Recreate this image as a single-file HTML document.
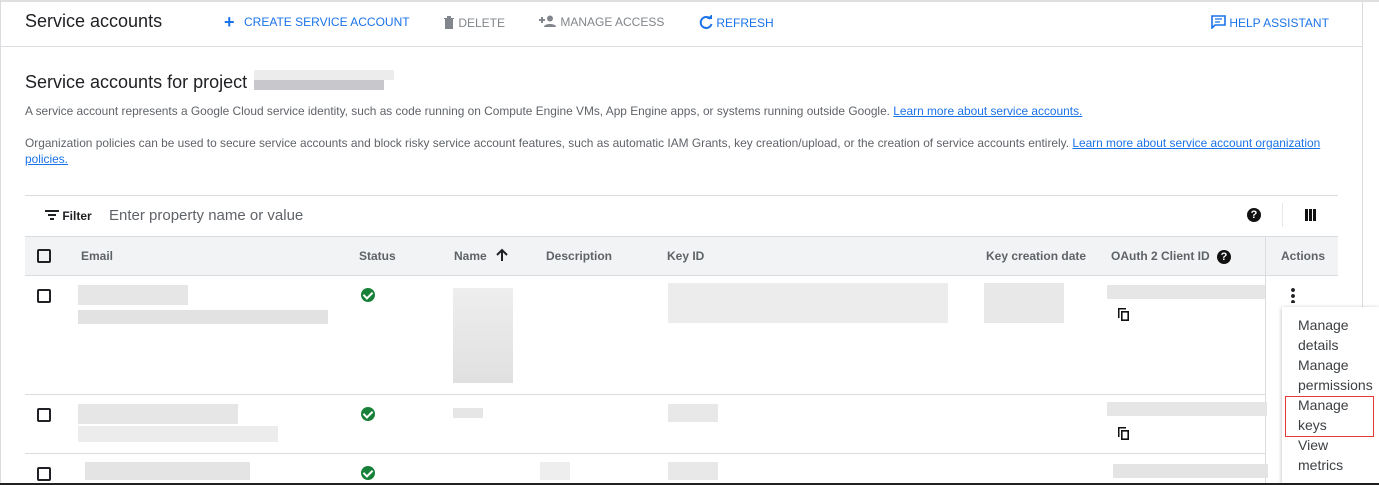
<!DOCTYPE html>
<html><head><meta charset="utf-8"><style>
*{box-sizing:border-box;margin:0;padding:0}
body{width:1379px;height:485px;overflow:hidden;background:#fff;font-family:"Liberation Sans",Arial,sans-serif;color:#202124;position:relative}
.a{position:absolute;white-space:nowrap}
.tb{font-size:12px;color:#1a73e8;font-weight:500;top:15px}
.gr{color:#80868b}
.p{font-size:11.9px;color:#5f6368}
a{color:#1a73e8;text-decoration:underline}
.th{font-size:12px;font-weight:bold;color:#5f6368;top:249px}
.cb{position:absolute;width:14px;height:14px;border:2px solid #202124;border-radius:2px}
.bl{position:absolute;background:#ddd}
.ok{position:absolute;width:14px;height:14px;border-radius:50%;background:#188038}
.ok:after{content:"";position:absolute;left:4px;top:2px;width:4px;height:7px;border:solid #fff;border-width:0 2px 2px 0;transform:rotate(45deg)}
.hl{position:absolute;left:25px;width:1313px;height:1px;background:#dadce0}
.mi{position:absolute;left:1298px;font-size:14px;color:#3c4043;line-height:20px}
</style></head><body>
<div class="a" style="left:0;top:0;width:1379px;height:2px;background:#e0e0e0"></div>
<div class="a" style="left:0;top:0;width:1px;height:485px;background:#dadce0"></div>
<div class="a" style="left:1362px;top:0;width:1px;height:485px;background:#dadce0"></div>
<div class="a" style="left:0;top:46px;width:1362px;height:1px;background:#dadce0"></div>
<div class="a" style="left:0;top:483px;width:1379px;height:2px;background:#222"></div>
<div class="a" style="left:25px;top:11px;font-size:18px">Service accounts</div>
<div class="a" style="left:224px;top:12px;font-size:18px;color:#1a73e8;font-weight:bold">+</div>
<div class="a tb" style="left:244px">CREATE SERVICE ACCOUNT</div>
<div class="a tb gr" style="left:443px"><svg width="12" height="14" style="vertical-align:-2px"><path d="M1 3h10v1H1zM4 1h4v2H4zM2 4h8v10H2z" fill="#80868b"/></svg> DELETE</div>
<div class="a tb gr" style="left:539px"><svg width="18" height="12" style="vertical-align:-1px"><circle cx="11" cy="3.5" r="3" fill="#80868b"/><path d="M5 12c0-4 12-4 12 0z" fill="#80868b"/><path d="M0 5h6M3 2v6" stroke="#80868b" stroke-width="2"/></svg> MANAGE ACCESS</div>
<div class="a tb" style="left:699px"><svg width="14" height="14" style="vertical-align:-2px"><path d="M11.5 4A5.5 5.5 0 1 0 12.5 9" stroke="#1a73e8" stroke-width="2" fill="none"/><path d="M8 4h5V-1z" fill="#1a73e8"/></svg> REFRESH</div>
<div class="a tb" style="left:1211px"><svg width="15" height="14" style="vertical-align:-2px"><path d="M1 1h13v9H4l-3 3z" stroke="#1a73e8" stroke-width="1.6" fill="none"/><path d="M4 4h7M4 7h5" stroke="#1a73e8" stroke-width="1.3"/></svg> HELP ASSISTANT</div>
<div class="a" style="left:25px;top:72px;font-size:18px">Service accounts for project</div>
<div class="a" style="left:254px;top:70px;width:140px;height:10px;background:#ececec"></div>
<div class="a" style="left:254px;top:80px;width:130px;height:10px;background:#c8c8cc"></div>
<div class="a p" style="left:25px;top:104px">A service account represents a Google Cloud service identity, such as code running on Compute Engine VMs, App Engine apps, or systems running outside Google. <a>Learn more about service accounts.</a></div>
<div class="a p" style="left:25px;top:136px">Organization policies can be used to secure service accounts and block risky service account features, such as automatic IAM Grants, key creation/upload, or the creation of service accounts entirely. <a>Learn more about service account organization</a></div>
<div class="a p" style="left:25px;top:152px"><a>policies.</a></div>
<div class="hl" style="top:195px"></div>
<div class="a" style="left:45px;top:209px;font-size:12px;font-weight:bold"><svg width="14" height="10" style="vertical-align:0"><path d="M0 1h14M3 5h8M5 9h4" stroke="#202124" stroke-width="2"/></svg> Filter</div>
<div class="a" style="left:109px;top:207px;font-size:15px;color:#5f6368">Enter property name or value</div>
<div class="a" style="left:1247px;top:208px;width:14px;height:14px;border-radius:50%;background:#111;color:#fff;font-size:11px;font-weight:bold;text-align:center;line-height:14px">?</div>
<div class="a" style="left:1282px;top:203px;width:1px;height:24px;background:#e8e8e8"></div>
<div class="a" style="left:1305px;top:209px;width:12px;height:12px;background:repeating-linear-gradient(90deg,#111 0 3px,#fff 3px 4px)"></div>
<div class="a" style="left:25px;top:236px;width:1313px;height:39px;background:#f1f3f4;border-top:1px solid #dadce0"></div>
<div class="a" style="left:1265px;top:236px;width:1px;height:247px;background:#dadce0"></div>
<div class="cb" style="left:37px;top:249px"></div>
<div class="a th" style="left:81px">Email</div>
<div class="a th" style="left:359px">Status</div>
<div class="a th" style="left:454px">Name</div>
<svg class="a" style="left:495px;top:248px" width="14" height="14"><path d="M7 13V2M2 7l5-5 5 5" stroke="#202124" stroke-width="2" fill="none"/></svg>
<div class="a th" style="left:546px">Description</div>
<div class="a th" style="left:667px">Key ID</div>
<div class="a th" style="left:986px">Key creation date</div>
<div class="a th" style="left:1111px">OAuth 2 Client ID <span style="display:inline-block;width:14px;height:14px;border-radius:50%;background:#111;color:#fff;font-size:11px;text-align:center;line-height:14px;margin-left:4px">?</span></div>
<div class="a th" style="left:1281px">Actions</div>
<div class="hl" style="top:275px"></div>
<div class="hl" style="top:394px;width:1240px"></div>
<div class="hl" style="top:453px;width:1240px"></div>
<div class="cb" style="left:37px;top:289px"></div>
<div class="cb" style="left:37px;top:408px"></div>
<div class="cb" style="left:37px;top:467px"></div>
<div class="ok" style="left:361px;top:288px"></div>
<div class="ok" style="left:361px;top:407px"></div>
<div class="ok" style="left:361px;top:466px"></div>
<div class="bl" style="left:78px;top:285px;width:110px;height:20px;background:#e6e6e6"></div>
<div class="bl" style="left:78px;top:310px;width:250px;height:14px;background:#e2e2e2"></div>
<div class="bl" style="left:453px;top:288px;width:60px;height:95px;background:linear-gradient(#eee,#e0e0e0)"></div>
<div class="bl" style="left:668px;top:283px;width:280px;height:40px;background:#ececec"></div>
<div class="bl" style="left:984px;top:283px;width:80px;height:40px;background:#e8e8e8"></div>
<div class="bl" style="left:1107px;top:285px;width:158px;height:14px;background:#e6e6e6"></div>
<div class="bl" style="left:78px;top:404px;width:160px;height:20px;background:#e6e6e6"></div>
<div class="bl" style="left:78px;top:426px;width:200px;height:16px;background:#ececec"></div>
<div class="bl" style="left:453px;top:408px;width:30px;height:10px;background:#e6e6e6"></div>
<div class="bl" style="left:668px;top:404px;width:50px;height:18px;background:#e8e8e8"></div>
<div class="bl" style="left:1107px;top:402px;width:160px;height:14px;background:#e6e6e6"></div>
<div class="bl" style="left:85px;top:462px;width:165px;height:18px;background:#e4e4e4"></div>
<div class="bl" style="left:540px;top:462px;width:30px;height:18px;background:#eee"></div>
<div class="bl" style="left:668px;top:462px;width:50px;height:18px;background:#e8e8e8"></div>
<div class="bl" style="left:1113px;top:464px;width:155px;height:14px;background:#e4e4e4"></div>
<svg class="a" style="left:1117px;top:307px" width="13" height="14"><path d="M1 1h8v1.5H2.5V11H1z" fill="#111"/><path d="M4 4h8v10H4zM5.6 5.6v6.8h4.8V5.6z" fill="#111" fill-rule="evenodd"/></svg>
<svg class="a" style="left:1117px;top:426px" width="13" height="14"><path d="M1 1h8v1.5H2.5V11H1z" fill="#111"/><path d="M4 4h8v10H4zM5.6 5.6v6.8h4.8V5.6z" fill="#111" fill-rule="evenodd"/></svg>
<div class="a" style="left:1291px;top:287px;width:4px;height:16px;background:radial-gradient(circle,#202124 1.8px,transparent 2px) 0 0/4px 6px"></div>
<div class="a" style="left:1282px;top:307px;width:97px;height:176px;background:#fff;box-shadow:0 1px 4px rgba(0,0,0,.3)"></div>
<div class="mi" style="top:315px">Manage<br>details</div>
<div class="mi" style="top:355px">Manage<br>permissions</div>
<div class="mi" style="top:395px">Manage<br>keys</div>
<div class="mi" style="top:435px">View<br>metrics</div>
<div class="a" style="left:1285px;top:396px;width:89px;height:41px;border:1px solid #e53935"></div>
</body></html>
